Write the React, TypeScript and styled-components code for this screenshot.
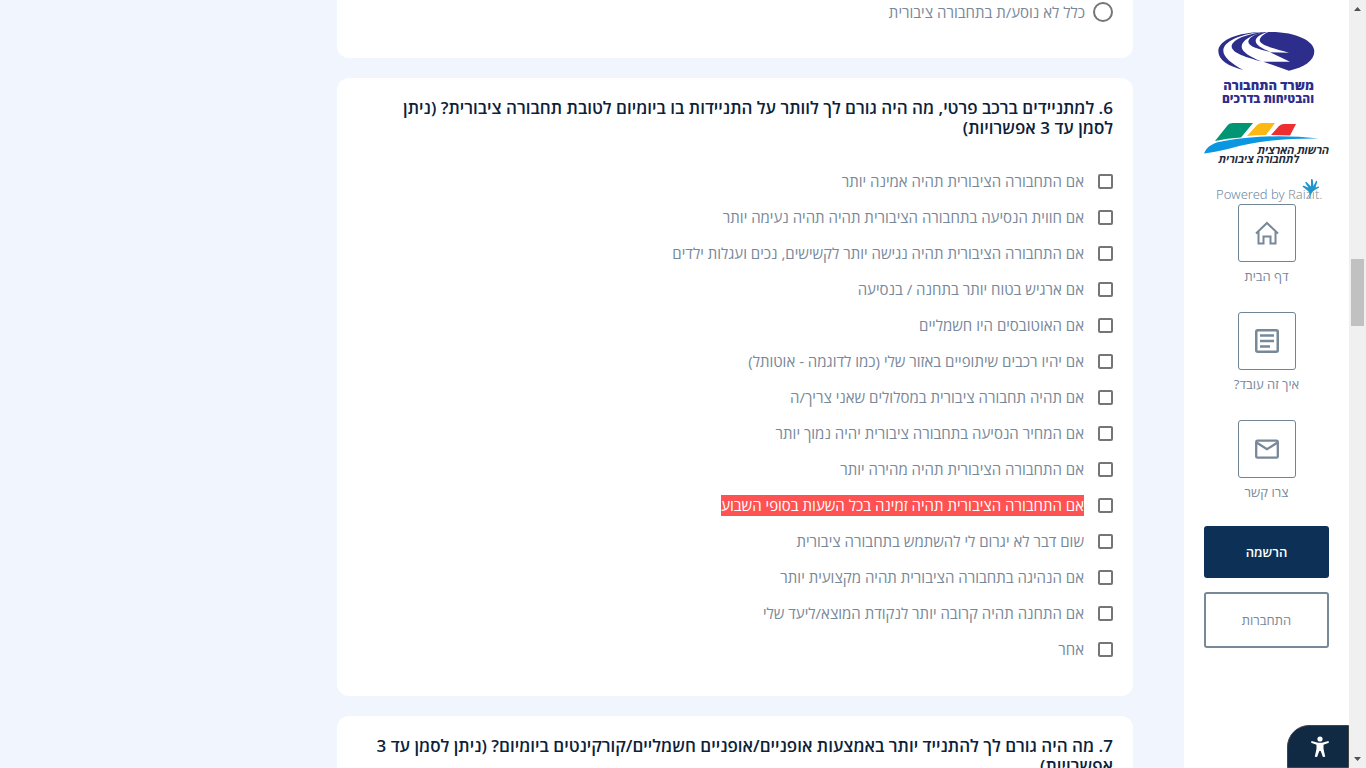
import React from "react";
import styled, { createGlobalStyle } from "styled-components";

const GlobalStyle = createGlobalStyle`
  * { box-sizing: border-box; }
  body {
    margin: 0;
    background: #f1f6fe;
    font-family: "Open Sans", "Noto Sans", sans-serif;
    color: #778899;
  }
`;

const Page = styled.div`
  display: flex;
  height: 100vh;
  overflow: hidden;
`;

const ScrollTrack = styled.div`
  flex: 0 0 17px;
  display: flex;
  flex-direction: column;
  align-items: center;
  background: #f0f0f0;
`;

const ScrollArrow = styled.svg`
  display: block;
  width: 17px;
  height: 17px;
  fill: #505050;
`;

const ScrollSpace = styled.div<{ $grow: number }>`
  flex: ${(p) => p.$grow} 1 0;
`;

const ScrollThumb = styled.div`
  width: 13px;
  height: 67px;
  background: #c1c1c1;
`;

const Sidebar = styled.aside`
  flex: 0 0 165px;
  display: flex;
  flex-direction: column;
  align-items: stretch;
  padding: 30px 20px 0;
  background: #fff;
`;

const LogoLink = styled.a<{ $gap: number }>`
  display: flex;
  justify-content: center;
  margin-bottom: ${(p) => p.$gap}px;
  svg { display: block; }
`;

const Nav = styled.nav`
  display: flex;
  flex-direction: column;
  gap: 26px;
  margin-bottom: 24px;
`;

const NavLink = styled.a`
  display: flex;
  flex-direction: column;
  align-items: center;
  gap: 4px;
  color: #778899;
  font-size: 13px;
  line-height: 20px;
  text-decoration: none;
`;

const NavBox = styled.span`
  display: flex;
  align-items: center;
  justify-content: center;
  width: 58px;
  height: 58px;
  border: 1px solid #708494;
  border-radius: 3px;
`;

const SideButton = styled.button<{ $primary?: boolean }>`
  height: ${(p) => (p.$primary ? 52 : 56)}px;
  margin: 0 0 14px;
  padding: 0;
  border: ${(p) => (p.$primary ? "0" : "2px solid #778899")};
  border-radius: 3px;
  background: ${(p) => (p.$primary ? "#0d3056" : "#fff")};
  color: ${(p) => (p.$primary ? "#fff" : "#778899")};
  font-family: inherit;
  font-size: 13px;
  font-weight: ${(p) => (p.$primary ? 600 : 400)};
  cursor: pointer;
`;

const AccessButton = styled.button`
  position: fixed;
  right: 17px;
  bottom: 0;
  display: flex;
  align-items: center;
  justify-content: center;
  width: 62px;
  height: 43px;
  padding: 0 0 0 4px;
  border: 1px solid #444;
  border-radius: 22px 0 0 0;
  background: #112a43;
  cursor: pointer;
`;

const Main = styled.main`
  flex: 1 1 0;
  min-width: 0;
  display: flex;
  flex-direction: column;
  gap: 20px;
  padding-inline-start: 51px;
`;

const Card = styled.fieldset<{ $continued?: boolean }>`
  flex: none;
  width: 100%;
  max-width: 796px;
  margin: 0;
  padding: ${(p) => (p.$continued ? "0 20px 34px" : "20px 20px 29px")};
  border: 0;
  border-radius: ${(p) => (p.$continued ? "0 0 12px 12px" : "12px")};
  background: #fff;
`;

const Question = styled.legend`
  float: inline-start;
  width: 100%;
  margin: 0 0 25px;
  padding: 0;
  padding-inline-end: 12px;
  color: #0b223a;
  font-size: 17px;
  font-weight: 600;
  line-height: 20px;
`;

const Options = styled.div`
  clear: both;
`;

const Option = styled.label<{ $radio?: boolean }>`
  display: flex;
  align-items: center;
  gap: ${(p) => (p.$radio ? 8 : 14)}px;
  height: ${(p) => (p.$radio ? 24 : 36)}px;
  font-size: 15px;
  font-weight: 400;
  line-height: 21px;
`;

const OptionInput = styled.input`
  appearance: none;
  flex: none;
  margin: 0;
  width: ${(p) => (p.type === "radio" ? 20 : 15)}px;
  height: ${(p) => (p.type === "radio" ? 20 : 15)}px;
  border: 2px solid #757575;
  border-radius: ${(p) => (p.type === "radio" ? "50%" : "2px")};
  background: #fff;
`;

const OptionText = styled.span<{ $marked?: boolean }>`
  background: ${(p) => (p.$marked ? "#ff5252" : "transparent")};
  color: ${(p) => (p.$marked ? "#fff" : "inherit")};
`;

const options = [
  "אם התחבורה הציבורית תהיה אמינה יותר",
  "אם חווית הנסיעה בתחבורה הציבורית תהיה תהיה נעימה יותר",
  "אם התחבורה הציבורית תהיה נגישה יותר לקשישים, נכים ועגלות ילדים",
  "אם ארגיש בטוח יותר בתחנה / בנסיעה",
  "אם האוטובסים היו חשמליים",
  "אם יהיו רכבים שיתופיים באזור שלי (כמו לדוגמה - אוטותל)",
  "אם תהיה תחבורה ציבורית במסלולים שאני צריך/ה",
  "אם המחיר הנסיעה בתחבורה ציבורית יהיה נמוך יותר",
  "אם התחבורה הציבורית תהיה מהירה יותר",
  "אם התחבורה הציבורית תהיה זמינה בכל השעות בסופי השבוע",
  "שום דבר לא יגרום לי להשתמש בתחבורה ציבורית",
  "אם הנהיגה בתחבורה הציבורית תהיה מקצועית יותר",
  "אם התחנה תהיה קרובה יותר לנקודת המוצא/ליעד שלי",
  "אחר",
];
const markedOption = 9;

const MinistryLogo = () => (
  <svg width="100" height="76" viewBox="0 0 100 76" role="img" aria-label="משרד התחבורה">
    <g fill="#2d2e8c" transform="translate(-3 -4) scale(0.3333)">
      <path d="M163 18C245 16 301 45 301 76c0 29-32 49-76 58l-77-27h80l-60-28 57 1C182 68 137 58 137 43c1-11 14-20 26-25z" />
      <path d="M152 18c-28 5-49 17-49 29 1 15 32 22 67 31-29-12-45-22-45-34 0-10 16-20 35-26z" />
      <path d="M142 19C90 26 53 44 53 62c2 19 44 32 89 44-35-14-59-29-59-44 0-18 29-35 66-43z" />
      <path d="M130 19C60 23 13 46 13 76c0 27 32 46 75 56-35-19-60-39-60-58 0-26 47-49 110-55z" />
    </g>
    <text x="97" y="60" direction="rtl" textAnchor="start" fontSize="13" fontWeight="800" fill="#2d2e8c">משרד התחבורה</text>
    <text x="97" y="73" direction="rtl" textAnchor="start" fontSize="12" fontWeight="800" fill="#2d2e8c">והבטיחות בדרכים</text>
  </svg>
);

const AuthorityLogo = () => (
  <svg width="125" height="44" viewBox="0 0 125 44" role="img" aria-label="הרשות הארצית לתחבורה ציבורית">
    <path fill="#009673" d="M11 19 23 4Q25 1 29 1H49L37 15.500Q23 16 11 19z" />
    <path fill="#fdb913" d="M43 14 53 3Q55 1 58 1H71L62 13Q52 13 43 14z" />
    <path fill="#ee2e31" d="M67 13 75 4Q77 2 80 2H92L86 13.500Q76 13 67 13z" />
    <path fill="#0a96e0" d="M0 31.500Q4 21 20 19Q65 11 115 16.500Q60 16 24 27Q10 30 0 31.500z" />
    <text x="125" y="32" direction="rtl" textAnchor="start" fontSize="11" fontWeight="700" fontStyle="italic" fill="#1f2a3a">הרשות הארצית</text>
    <text x="95" y="41" direction="rtl" textAnchor="start" fontSize="11" fontWeight="700" fontStyle="italic" fill="#1f2a3a">לתחבורה ציבורית</text>
  </svg>
);

const PoweredLogo = () => (
  <svg width="110" height="26" viewBox="0 0 110 26" direction="ltr" role="img" aria-label="Powered by Raizit">
    <text x="4" y="21" direction="ltr" fontFamily="Noto Sans" fontSize="13" fontWeight="300" fill="#6f87a3">Powered by <tspan fill="#8b9096">Raizit.</tspan></text>
    <path
      fill="#2196cc"
      d="M97 20c1-3 1-5-1-7l-5-4c-1-1 0-1.700 1-1.200l4.500 2-3-4.500c-.5-1 .7-1.700 1.500-.8L99 8.500V2c0-1.200 1.500-1.200 1.800 0l.7 6 2.300-4.500c.6-1 1.700-.4 1.400.6l-1.700 5.400 2.700-.9c1-.2 1.200.8.400 1.200L102 12.500c-2.500 1.500-3.500 4.500-3.500 7.500z"
    />
  </svg>
);

const HomeIcon = () => (
  <svg width="24" height="24" viewBox="0 0 24 24" fill="none" stroke="#778899" strokeWidth="2" aria-hidden="true">
    <path d="M1 12.500 12 2 23 12.500M3.500 10.500v12h5V15.500h7v7h5v-12" />
  </svg>
);

const ArticleIcon = () => (
  <svg width="24" height="24" viewBox="0 0 24 24" fill="none" stroke="#778899" aria-hidden="true">
    <rect x="1.250" y="1.250" width="21.500" height="21.500" rx="1.500" strokeWidth="2.500" />
    <path d="M5 6.500h14M5 12h14M5 17.500h10" strokeWidth="2.500" />
  </svg>
);

const MailIcon = () => (
  <svg width="24" height="20" viewBox="0 0 24 20" fill="none" stroke="#778899" strokeWidth="2.300" aria-hidden="true">
    <rect x="1.200" y="1.700" width="21.600" height="17" rx="1.300" />
    <path d="M1.500 3.500 12 10.200 22.500 3.500" />
  </svg>
);

const AccessIcon = () => (
  <svg width="20" height="22" viewBox="0 0 20 22" fill="#fff" aria-hidden="true">
    <circle cx="10" cy="3" r="2.600" />
    <path d="M1.500 5 8 6.700h4L18.500 5l.4 1.700-5.400 2v4l1.700 8-2.300.4L10.700 15H9.300l-2.200 6.100-2.300-.4 1.700-8v-4l-5.400-2z" />
  </svg>
);

const navItems = [
  { label: "דף הבית", Icon: HomeIcon },
  { label: "איך זה עובד?", Icon: ArticleIcon },
  { label: "צרו קשר", Icon: MailIcon },
];

export default function App() {
  return (
    <Page dir="rtl" lang="he">
      <GlobalStyle />
      <ScrollTrack aria-hidden="true">
        <ScrollArrow viewBox="0 0 17 17"><path d="M5 11h7L8.500 7z" /></ScrollArrow>
        <ScrollSpace $grow={242} />
        <ScrollThumb />
        <ScrollSpace $grow={425} />
        <ScrollArrow viewBox="0 0 17 17"><path d="M5 6h7l-3.500 4z" /></ScrollArrow>
      </ScrollTrack>
      <Sidebar>
        <LogoLink href="#" $gap={16}><MinistryLogo /></LogoLink>
        <LogoLink href="#" $gap={12}><AuthorityLogo /></LogoLink>
        <LogoLink href="#" $gap={0}><PoweredLogo /></LogoLink>
        <Nav>
          {navItems.map(({ label, Icon }) => (
            <NavLink href="#" key={label}>
              <NavBox><Icon /></NavBox>
              {label}
            </NavLink>
          ))}
        </Nav>
        <SideButton type="button" $primary>הרשמה</SideButton>
        <SideButton type="button">התחברות</SideButton>
      </Sidebar>
      <Main>
        <Card $continued>
          <Option $radio>
            <OptionInput type="radio" name="question5" />
            <OptionText>כלל לא נוסע/ת בתחבורה ציבורית</OptionText>
          </Option>
        </Card>
        <Card>
          <Question>6. למתניידים ברכב פרטי, מה היה גורם לך לוותר על התניידות בו ביומיום לטובת תחבורה ציבורית? (ניתן לסמן עד 3 אפשרויות)</Question>
          <Options>
            {options.map((text, i) => (
              <Option key={text}>
                <OptionInput type="checkbox" name="question6" />
                <OptionText $marked={i === markedOption}>{text}</OptionText>
              </Option>
            ))}
          </Options>
        </Card>
        <Card>
          <Question>7. מה היה גורם לך להתנייד יותר באמצעות אופניים/אופניים חשמליים/קורקינטים ביומיום? (ניתן לסמן עד 3 אפשרויות)</Question>
        </Card>
      </Main>
      <AccessButton type="button" aria-label="נגישות"><AccessIcon /></AccessButton>
    </Page>
  );
}
